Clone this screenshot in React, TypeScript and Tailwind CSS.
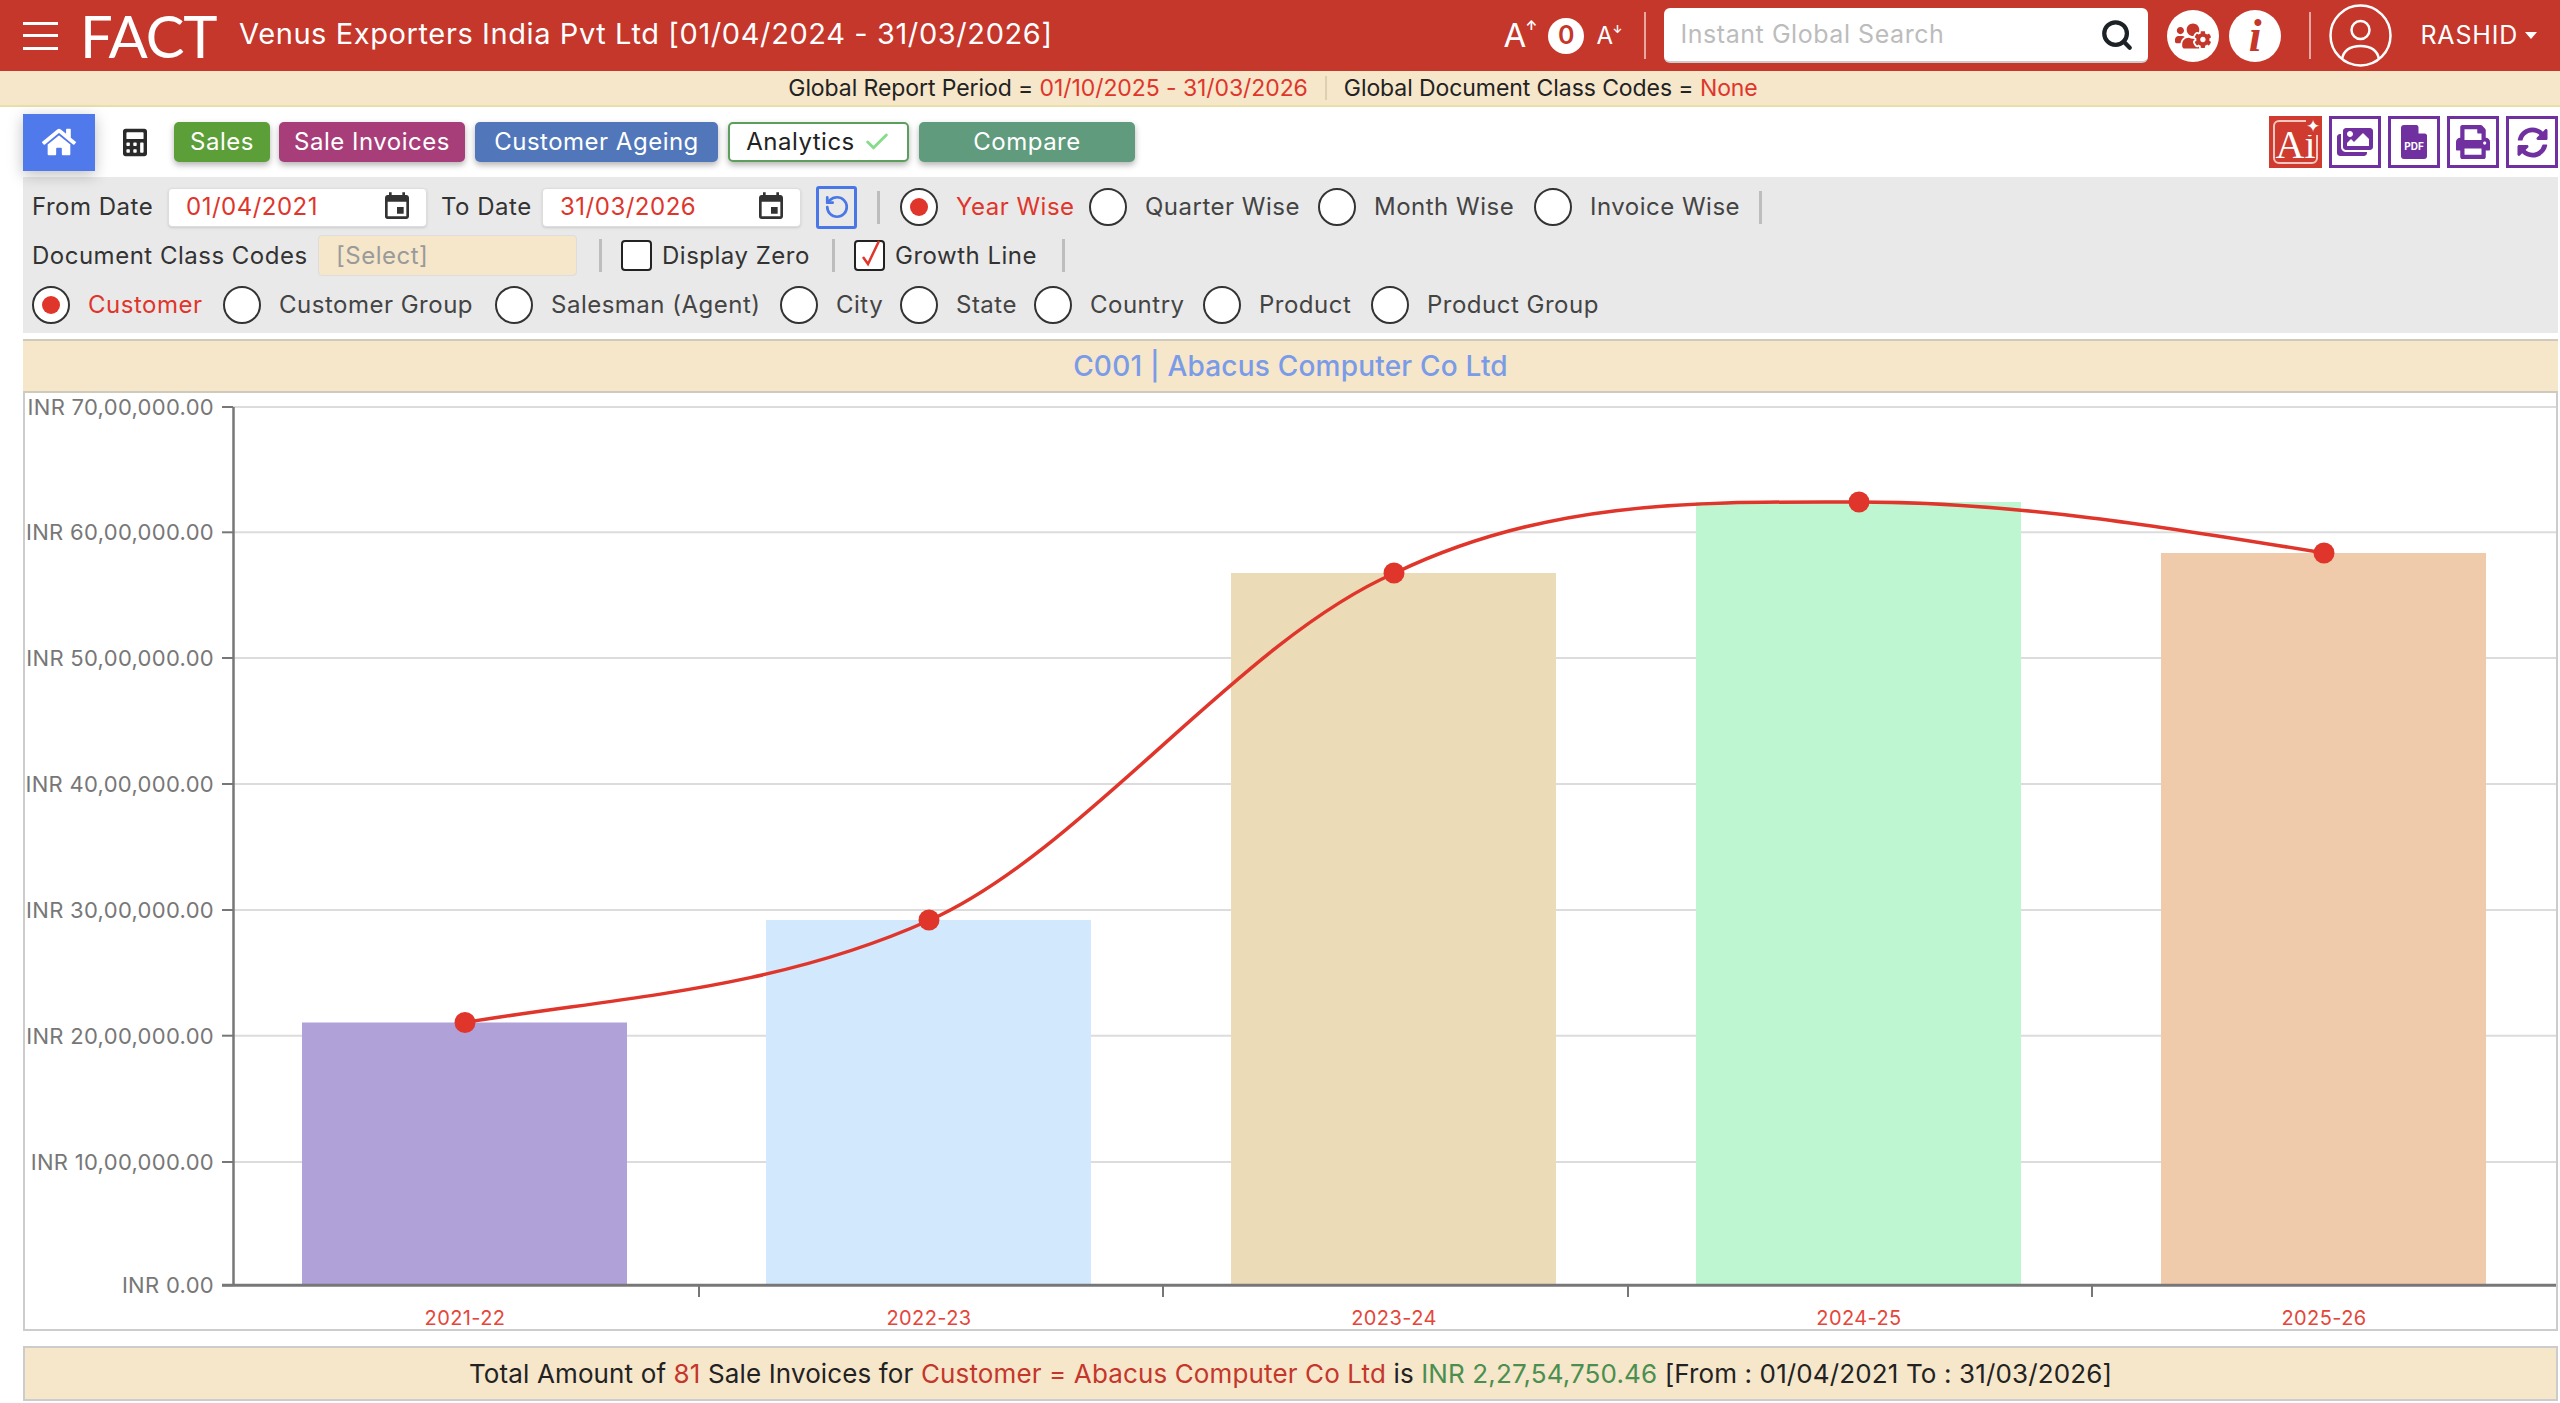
import { Check, RotateCcw, Search } from "lucide-react";
import { FaCalculator, FaHome, FaImages, FaPrint, FaSyncAlt, FaUsersCog } from "react-icons/fa";
import { MdEvent } from "react-icons/md";

const bars = [
  { label: "2021-22", x: 302, top: 1022.5, fill: "#b0a1d8" },
  { label: "2022-23", x: 766, top: 920, fill: "#d1e8fd" },
  { label: "2023-24", x: 1231, top: 573, fill: "#ebdbb7" },
  { label: "2024-25", x: 1696, top: 502, fill: "#bff6d2" },
  { label: "2025-26", x: 2161, top: 553, fill: "#f0cbab" },
];

const ticks = [
  { y: 407, t: "70,00,000.00" },
  { y: 532.3, t: "60,00,000.00" },
  { y: 658, t: "50,00,000.00" },
  { y: 784, t: "40,00,000.00" },
  { y: 910, t: "30,00,000.00" },
  { y: 1035.7, t: "20,00,000.00" },
  { y: 1162, t: "10,00,000.00" },
  { y: 1285.3, t: "0.00" },
];

function Radio({ label, width, active = false }: { label: string; width: string; active?: boolean }) {
  return (
    <div className="flex items-center gap-[18px]">
      <div className="flex h-[38px] w-[38px] items-center justify-center rounded-full border-2 border-[#333] bg-white">
        {active && <div className="h-[18px] w-[18px] rounded-full bg-[#e0352b]" />}
      </div>
      <span className={"whitespace-nowrap " + width + (active ? " text-[#e0352b]" : " text-[#444]")}>{label}</span>
    </div>
  );
}

function Sep() {
  return <div className="h-[33px] w-[3px] bg-[#bdbdbd]" />;
}

function DateInput({ value }: { value: string }) {
  return (
    <div className="flex h-[39px] w-[259px] items-center justify-between rounded-[4px] border border-[#ddd] bg-white pl-[17px] pr-[13px] text-[#e0352b] shadow-sm">
      {value}
      <MdEvent className="h-[32px] w-[32px] text-[#333]" />
    </div>
  );
}

function CheckBox({ label, width, checked = false }: { label: string; width: string; checked?: boolean }) {
  return (
    <div className="flex items-center gap-[10px]">
      <div className="relative h-[31px] w-[31px] rounded-[4px] border-2 border-[#222] bg-white">
        {checked && (
          <svg viewBox="0 0 31 31" className="absolute left-[-2px] top-[-4px] h-[31px] w-[31px]">
            <path d="M9 19 L14 26 L25 3" fill="none" stroke="#e0352b" strokeWidth="2.5" />
          </svg>
        )}
      </div>
      <span className={"whitespace-nowrap text-[#333] " + width}>{label}</span>
    </div>
  );
}

function ToolBtn({ className, children }: { className: string; children: React.ReactNode }) {
  return <div className={"flex h-[40px] items-center justify-center rounded-[5px] shadow-[0_3px_6px_rgba(0,0,0,0.3)] " + className}>{children}</div>;
}

function IconBox({ children }: { children: React.ReactNode }) {
  return <div className="flex h-[52px] w-[52px] items-center justify-center border-[3px] border-[#7030a0] bg-white text-[#7030a0]">{children}</div>;
}

function Chart() {
  return (
    <svg viewBox="23 393 2535 938" className="h-[938px] w-[2535px] font-['Inter',sans-serif]">
      {ticks.map(({ y, t }, i) => (
        <g key={t}>
          {i < 7 && <line x1="233" x2="2556" y1={y} y2={y} stroke="#dcdcdc" strokeWidth="2" />}
          <line x1="222" x2="233" y1={y} y2={y} stroke="#777" strokeWidth="2" />
          <text x="214" y={y + 8} textAnchor="end" fontSize="22" fill="#777" letterSpacing="0.3">
            INR {t}
          </text>
        </g>
      ))}
      {bars.map((b) => (
        <rect key={b.label} x={b.x} y={b.top} width="325" height={1285 - b.top} fill={b.fill} />
      ))}
      <line x1="233.5" x2="233.5" y1="407" y2="1286" stroke="#777" strokeWidth="2.5" />
      <line x1="222" x2="2556" y1="1285.3" y2="1285.3" stroke="#777" strokeWidth="3" />
      {[699, 1163, 1628, 2092].map((x) => (
        <line key={x} x1={x} x2={x} y1="1285" y2="1297" stroke="#777" strokeWidth="2" />
      ))}
      {bars.map((b) => (
        <text key={b.label} x={b.x + 163} y="1325" textAnchor="middle" fontSize="20" fill="#e5463a" letterSpacing="0.4">
          {b.label}
        </text>
      ))}
      <path
        d="M465 1022.5 C620 997 775 990 930 920 C1085 850 1240 640 1395 573 C1550 498 1704 502 1859 502 C2014 502 2169 527.4 2324 553"
        fill="none"
        stroke="#e0352b"
        strokeWidth="3.5"
      />
      {bars.map((b) => (
        <circle key={b.label} cx={b.x + 163} cy={b.top} r="10.5" fill="#e0352b" />
      ))}
    </svg>
  );
}

export default function App() {
  return (
    <div className="h-[1403px] w-[2560px] overflow-hidden bg-white font-['Inter',sans-serif] text-[24px] tracking-[0.5px]">
      {/* header */}
      <div className="flex h-[71px] items-center bg-[#c5362b] text-white">
        <div className="ml-[23px] flex w-[35px] flex-col gap-[9.5px]">
          <div className="h-[3px] bg-white" />
          <div className="h-[3px] bg-white" />
          <div className="h-[3px] bg-white" />
        </div>
        <div className="ml-[22px] w-[136px] whitespace-nowrap font-['Lato',sans-serif] text-[58px] font-normal leading-none tracking-[-1px]">FACT</div>
        <div className="mb-[4px] ml-[23px] text-[29px] tracking-[0.6px]">Venus Exporters India Pvt Ltd [01/04/2024 - 31/03/2026]</div>
        <div className="ml-auto flex items-center">
          <div className="relative w-[34px] text-[33px] leading-none">
            A<span className="absolute left-[22px] top-0 text-[13px] font-bold">↑</span>
          </div>
          <div className="ml-[11px] flex h-[36px] w-[36px] items-center justify-center rounded-full bg-white text-[25px] font-semibold text-[#c5362b]">0</div>
          <div className="relative ml-[12px] w-[25px] text-[24px] leading-none">
            A<span className="absolute left-[16px] top-0 text-[11px] font-bold">↓</span>
          </div>
          <div className="ml-[23px] h-[47px] w-[2px] bg-[#e8a8a2]" />
          <div className="ml-[18px] flex h-[55px] w-[484px] items-center justify-between rounded-[6px] border-b-2 border-[#ccc] bg-white pl-[16px] pr-[14px] text-[25px] tracking-[0.55px] text-[#bcbcbc]">
            Instant Global Search
            <Search className="h-[34px] w-[34px] text-[#1c2226]" strokeWidth={3} />
          </div>
          <div className="ml-[19px] flex h-[52px] w-[52px] items-center justify-center rounded-full bg-white text-[#c5362b]">
            <FaUsersCog className="h-[36px] w-[36px]" />
          </div>
          <div className="ml-[10px] flex h-[52px] w-[52px] items-center justify-center rounded-full bg-white font-['Liberation_Serif',serif] text-[46px] font-bold italic leading-none text-[#c5362b]">i</div>
          <div className="ml-[28px] h-[47px] w-[2px] bg-[#e8a8a2]" />
          <svg viewBox="0 0 63 63" className="ml-[18px] h-[63px] w-[63px]" fill="none" stroke="white" strokeWidth="2.5">
            <circle cx="31.5" cy="31.5" r="30" />
            <circle cx="31.5" cy="26" r="9" />
            <path d="M13 55 C15 45 22 42 31.5 42 C41 42 48 45 50 55" />
          </svg>
          <div className="ml-[28px] text-[25px] tracking-[0.8px]">RASHID</div>
          <div className="ml-[7px] mr-[23px] h-0 w-0 border-x-[6px] border-t-[7px] border-x-transparent border-t-white" />
        </div>
      </div>

      {/* global report notice */}
      <div className="flex h-[36px] items-center justify-center border-b-2 border-[#ebdfa8] bg-[#f6e6ca] pr-[14px] text-[23px] tracking-[-0.08px] text-[#222]">
        <span>
          Global Report Period = <span className="text-[#e0352b]">01/10/2025 - 31/03/2026</span>
        </span>
        <div className="mx-[17px] h-[24px] w-[2px] bg-[#ddd0b0]" />
        <span>
          Global Document Class Codes = <span className="text-[#e0352b]">None</span>
        </span>
      </div>

      {/* toolbar */}
      <div className="flex h-[70px] items-center pl-[23px] pr-[2px] text-[24px]">
        <div className="flex h-[57px] w-[72px] items-center justify-center bg-[#5079ec] shadow-[0_4px_14px_rgba(0,0,0,0.25)]">
          <FaHome className="h-[34px] w-[34px] text-white" />
        </div>
        <FaCalculator className="ml-[28px] h-[31px] w-[24px] text-[#2a2a2a]" />
        <ToolBtn className="ml-[27px] w-[96px] bg-[#5c9e37] text-white">Sales</ToolBtn>
        <ToolBtn className="ml-[9px] w-[186px] bg-[#a73e79] text-white">Sale Invoices</ToolBtn>
        <ToolBtn className="ml-[10px] w-[243px] bg-[#5177ba] text-white">Customer Ageing</ToolBtn>
        <ToolBtn className="ml-[10px] w-[181px] gap-[8px] border-2 border-[#5c9e5c] bg-white text-[#222]">
          Analytics
          <Check className="h-[28px] w-[28px] text-[#86dc8a]" strokeWidth={2.5} />
        </ToolBtn>
        <ToolBtn className="ml-[10px] w-[216px] bg-[#5f9b7c] text-white">Compare</ToolBtn>
        <div className="ml-auto flex items-center gap-[7px]">
          <div className="relative flex h-[52px] w-[53px] items-center justify-center bg-[#cf3b2e] font-['Liberation_Serif',serif] text-[40px] tracking-normal text-white">
            <div className="absolute inset-[4px] rounded-[6px] border-2 border-[#f3c6c0]" />
            <span className="relative mt-[5px]">Ai</span>
            <span className="absolute right-[2px] top-[2px] bg-[#cf3b2e] text-[17px] leading-none">✦</span>
          </div>
          <IconBox>
            <FaImages className="h-[36px] w-[36px]" />
          </IconBox>
          <IconBox>
            <svg viewBox="0 0 26 34" className="h-[34px] w-[26px]">
              <path d="M3 0 H16 L26 10 V31 a3 3 0 0 1 -3 3 H3 a3 3 0 0 1 -3 -3 V3 a3 3 0 0 1 3 -3 Z" fill="#7030a0" />
              <path d="M17.5 0 L26 8.5 H17.5 Z" fill="white" />
              <text x="13" y="25" textAnchor="middle" fontSize="10" fontWeight="700" fill="white" letterSpacing="0">PDF</text>
            </svg>
          </IconBox>
          <IconBox>
            <FaPrint className="h-[34px] w-[34px]" />
          </IconBox>
          <IconBox>
            <FaSyncAlt className="h-[31px] w-[31px]" />
          </IconBox>
        </div>
      </div>

      {/* filters */}
      <div className="ml-[23px] mr-[2px] flex h-[156px] flex-col bg-[#e9e9e9] pl-[9px] pt-[10px] text-[#333]">
        <div className="flex h-[40px] items-center">
          <span className="w-[126px] whitespace-nowrap">From Date</span>
          <div className="ml-[10px]"><DateInput value="01/04/2021" /></div>
          <span className="ml-[14px] w-[89px] whitespace-nowrap">To Date</span>
          <div className="ml-[12px]"><DateInput value="31/03/2026" /></div>
          <div className="ml-[15px] flex h-[43px] w-[41px] items-center justify-center rounded-[3px] border-[3px] border-[#4a77e8] text-[#4a77e8]">
            <RotateCcw className="h-[26px] w-[26px]" strokeWidth={2.5} />
          </div>
          <div className="mx-[20px]"><Sep /></div>
          <div className="flex items-center gap-[18px]">
            <Radio label="Year Wise" width="w-[115px]" active />
            <Radio label="Quarter Wise" width="w-[155px]" />
            <Radio label="Month Wise" width="w-[142px]" />
            <Radio label="Invoice Wise" width="w-[147px]" />
          </div>
          <div className="ml-[22px]"><Sep /></div>
        </div>
        <div className="mt-[8px] flex h-[41px] items-center">
          <span className="w-[275px] whitespace-nowrap">Document Class Codes</span>
          <div className="ml-[11px] flex h-[41px] w-[259px] items-center rounded-[4px] border border-[#ddd] bg-[#f6e6ca] pl-[17px] text-[#9a9a9a]">[Select]</div>
          <div className="ml-[22px]"><Sep /></div>
          <div className="ml-[19px]"><CheckBox label="Display Zero" width="w-[147px]" /></div>
          <div className="ml-[23px]"><Sep /></div>
          <div className="ml-[19px]"><CheckBox label="Growth Line" width="w-[144px]" checked /></div>
          <div className="ml-[23px]"><Sep /></div>
        </div>
        <div className="mt-[10px] flex h-[38px] items-center gap-[18px]">
          <Radio label="Customer" width="w-[117px]" active />
          <Radio label="Customer Group" width="w-[198px]" />
          <Radio label="Salesman (Agent)" width="w-[211px]" />
          <Radio label="City" width="w-[46px]" />
          <Radio label="State" width="w-[60px]" />
          <Radio label="Country" width="w-[95px]" />
          <Radio label="Product" width="w-[94px]" />
          <Radio label="Product Group" width="w-[176px]" />
        </div>
      </div>

      {/* chart title */}
      <div className="ml-[23px] mr-[2px] mt-[6px] flex h-[54px] items-center justify-center border-y-2 border-[#cfcabd] bg-[#f6e6ca] text-[28px] font-medium tracking-[0.2px] text-[#7a9be8]">
        C001 | Abacus Computer Co Ltd
      </div>

      <div className="ml-[23px] mr-[2px] h-[938px] border-x-2 border-b-2 border-[#cccccc] bg-white">
        <div className="-ml-[2px]"><Chart /></div>
      </div>

      {/* total */}
      <div className="ml-[23px] mr-[2px] mt-[15px] flex h-[55px] items-center justify-center border-2 border-[#cccccc] bg-[#f6e6ca] text-[26px] tracking-[0.13px] text-[#222]">
        <span>
          Total Amount of <span className="text-[#c5362b]">81</span> Sale Invoices for <span className="text-[#c5362b]">Customer = Abacus Computer Co Ltd</span> is <span className="text-[#4a8f4f]">INR 2,27,54,750.46</span> [From : 01/04/2021 To : 31/03/2026]
        </span>
      </div>
    </div>
  );
}
